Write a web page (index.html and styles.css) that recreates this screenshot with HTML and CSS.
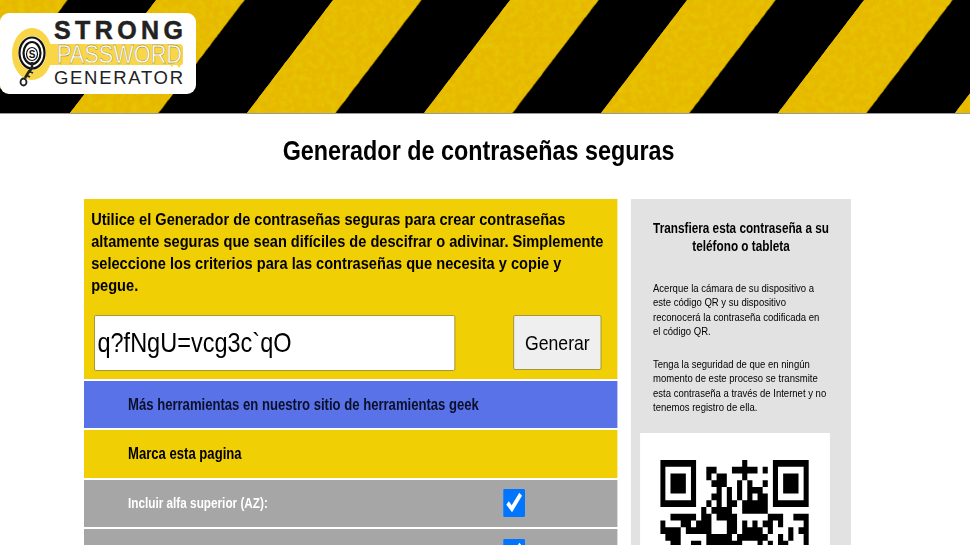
FILE: index.html
```html
<!DOCTYPE html>
<html lang="es">
<head>
    <meta charset="UTF-8">
    <link rel="stylesheet" href="styles.css">
    <title>Generador de contraseñas seguras</title>
</head>
<body>
    <header class="banner">
        <svg class="stripes" width="970" height="113">
            <defs>
                <pattern id="hazard" patternUnits="userSpaceOnUse" width="177" height="113" patternTransform="translate(333 0) skewX(-37.3)">
                    <rect width="88.5" height="113" fill="#e6b802"/>
                </pattern>
                <filter id="grain" x="0" y="0" width="100%" height="100%">
                    <feTurbulence type="fractalNoise" baseFrequency="0.16" numOctaves="3" seed="4" result="noise"/>
                    <feColorMatrix in="noise" type="matrix" values="0 0 0 0 0.80  0 0 0 0 0.55  0 0 0 0 0  2.4 0 0 0 -0.85" result="spots"/>
                    <feComposite in="spots" in2="SourceAlpha" operator="in" result="clipped"/>
                    <feMerge>
                        <feMergeNode in="SourceGraphic"/>
                        <feMergeNode in="clipped"/>
                    </feMerge>
                </filter>
            </defs>
            <rect width="970" height="113" fill="#000"/>
            <rect width="970" height="113" fill="url(#hazard)" filter="url(#grain)"/>
        </svg>
        <div class="logo">
            <svg width="196" height="81" viewBox="0 13 196 81">
                <ellipse cx="32" cy="54" rx="20" ry="26" fill="#f8d648"/>
                <path d="M46 44h133q4 0 4 4v13q0 4-2 4l-2 3-2-3h-4l-1 2-2-2H46z" fill="#f8d648"/>
                <ellipse cx="32" cy="53" rx="14" ry="17" fill="#fff"/>
                <ellipse cx="32" cy="53" rx="12.5" ry="15.5" fill="none" stroke="#111" stroke-width="2.2"/>
                <ellipse cx="32" cy="53" rx="8.5" ry="11" fill="none" stroke="#111" stroke-width="2.2"/>
                <ellipse cx="32" cy="54" rx="5.5" ry="6.5" fill="#fff" stroke="#111" stroke-width="1.2"/>
                <text class="logo-s" x="32" y="57.5" text-anchor="middle">S</text>
                <path d="M32 62v6l-4 5-3 5" fill="none" stroke="#222" stroke-width="2.6"/>
                <path d="M28 71l5 2M26 75l4 2" fill="none" stroke="#222" stroke-width="1.6"/>
                <ellipse cx="23.500" cy="82" rx="3" ry="3.500" fill="#fff" stroke="#222" stroke-width="1.800"/>
                <text class="logo-strong" x="54" y="38.500" textLength="129">STRONG</text>
                <text class="logo-pass" x="57" y="63" textLength="125" lengthAdjust="spacingAndGlyphs">PASSWORD</text>
                <text class="logo-gen" x="54" y="84" textLength="129">GENERATOR</text>
            </svg>
        </div>
    </header>

    <div class="page">
        <h1 class="title">Generador de contraseñas seguras</h1>

        <div class="columns">
            <main class="tool">
                <div class="intro">
                    <p>Utilice el Generador de contraseñas seguras para crear contraseñas altamente seguras que sean difíciles de descifrar o adivinar. Simplemente seleccione los criterios para las contraseñas que necesita y copie y pegue.</p>
                    <div class="generate-row">
                        <input class="password" type="text" value="q?fNgU=vcg3c`qO">
                        <button class="generate-btn" type="button">Generar</button>
                    </div>
                </div>
                <div class="row row-blue">Más herramientas en nuestro sitio de herramientas geek</div>
                <div class="row row-yellow">Marca esta pagina</div>
                <label class="row row-option"><span>Incluir alfa superior (AZ):</span><input type="checkbox" checked></label>
                <label class="row row-option"><span>Incluir alfa inferior (az):</span><input type="checkbox" checked></label>
            </main>
            <aside class="transfer">
                <h2>Transfiera esta contraseña a su teléfono o tableta</h2>
                <p>Acerque la cámara de su dispositivo a este código QR y su dispositivo reconocerá la contraseña codificada en el código QR.</p>
                <p>Tenga la seguridad de que en ningún momento de este proceso se transmite esta contraseña a través de Internet y no tenemos registro de ella.</p>
                <div class="qr-box">
                    <svg class="qr" viewBox="0 0 29 13" preserveAspectRatio="none">
                        <path fill-rule="evenodd" d="M0 0h7v7H0zM1 1v5h5V1zM2 2h3v3H2zM22 0h7v7h-7zM23 1v5h5V1zM24 2h3v3h-3z"/>
                        <path fill="none" stroke="#000" d="M16 .5h1M9 1.500h2M14 1.500h5M20 1.500h1M9 2.500h1M11 2.500h2M16 2.500h1M10 3.500h3M15 3.500h1M17 3.500h1M20 3.500h1M11 4.500h1M13 4.500h1M15 4.500h1M17 4.500h3M10 5.500h2M13 5.500h1M15 5.500h1M17 5.500h1M19 5.500h2M9 6.500h1M11 6.500h1M13 6.500h2M16 6.500h5M8 7.500h1M10 7.500h4M16 7.500h5M2 8.500h4M6 8.500h1M8 8.500h2M11 8.500h4M21 8.500h3M26 8.500h3M0 9.500h1M4 9.500h2M7 9.500h3M13 9.500h2M16 9.500h1M18 9.500h1M20 9.500h2M23 9.500h1M28 9.500h1M0 10.500h4M5 10.500h5M13 10.500h2M16 10.500h4M21 10.500h1M25 10.500h1M27 10.500h2M1 11.500h3M9 11.500h5M15 11.500h6M23 11.500h1M25 11.500h1M28 11.500h1M2 12.500h2M6 12.500h2M9 12.500h7M19 12.500h1M21 12.500h1M23 12.500h2M28 12.500h1"/>
                    </svg>
                </div>
            </aside>
        </div>
    </div>
</body>
</html>
```

FILE: styles.css
```css
html {
    overflow: hidden;
}

body {
    font-family: "Liberation Sans", Arial, sans-serif;
    margin: 0;
    padding: 0;
    background-color: #fff;
    color: #000;
    height: 545px;
    overflow: hidden;
}

.banner {
    position: relative;
    height: 114px;
    border-bottom: 1px solid #999;
    box-sizing: border-box;
}

.stripes {
    display: block;
}

.logo {
    position: absolute;
    left: 0;
    top: 13px;
    width: 196px;
    height: 81px;
    background-color: #fff;
    border-radius: 9px;
}

.logo svg {
    display: block;
    overflow: visible;
}

.logo-s {
    font-size: 10px;
    font-weight: bold;
    fill: #111;
}

.logo-strong {
    font-size: 25px;
    font-weight: bold;
    fill: #222;
    stroke: #222;
    stroke-width: 0.5;
}

.logo-pass {
    font-size: 25px;
    fill: #fff;
    stroke: #8d7c2c;
    stroke-width: 0.4;
}

.logo-gen {
    font-size: 18.5px;
    fill: #222;
}

/* the reference is squeezed sideways, so everything below the banner is too */
.page {
    width: 1154px;
    transform: scaleX(0.84);
    transform-origin: 0 0;
}

.title {
    font-size: 27.8px;
    text-align: center;
    margin: 20px 14.5px 31px 0;
    line-height: 34px;
}

.columns {
    display: flex;
    gap: 16.7px;
    padding-left: 100px;
}

.tool {
    width: 634.5px;
}

.intro {
    background-color: #f1cf05;
    padding: 9px 9px 9px 8.5px;
    height: 162px;
    margin-bottom: 2px;
}

.intro p {
    margin: 0;
    font-size: 17.4px;
    line-height: 22px;
    font-weight: bold;
}

.generate-row {
    display: flex;
    justify-content: space-between;
    margin: 19px 9.5px 0 3.5px;
}

.password {
    width: 430px;
    height: 56px;
    box-sizing: border-box;
    font-family: "Liberation Sans", Arial, sans-serif;
    font-size: 28px;
    padding: 0 3px;
    border: 1px solid #9b8f3a;
    border-radius: 2px;
}

.generate-btn {
    width: 105px;
    height: 55px;
    padding: 0;
    font-family: "Liberation Sans", Arial, sans-serif;
    font-size: 21px;
    background-color: #efefef;
    border: 1px solid #9b8f3a;
    border-radius: 2px;
}

.row {
    height: 47.3px;
    margin-bottom: 2px;
    padding-left: 52.4px;
    display: flex;
    align-items: center;
    font-weight: bold;
    font-size: 15.6px;
}

.row-blue {
    background-color: #5a72e8;
    color: #0a0f2a;
}

.row-yellow {
    background-color: #f1cf05;
}

.row-option {
    background-color: #a6a6a6;
    color: #fff;
    font-size: 14px;
}

.row-option span {
    width: 447px;
}

.row-option input {
    width: 26px;
    height: 26px;
    margin: 0;
    transform: scaleY(1.115);
    accent-color: #0075ff;
}

.transfer {
    width: 262px;
    height: 400px;
    background-color: #e2e2e2;
    padding: 0 10.7px;
    box-sizing: border-box;
}

.transfer h2 {
    font-size: 14px;
    line-height: 18px;
    text-align: center;
    margin: 20px 0 26px;
}

.transfer p {
    font-size: 11.35px;
    line-height: 14.3px;
    margin: 0 17px 19px 15.5px;
}

.qr-box {
    background-color: #fff;
    width: 226px;
    height: 112px;
    padding-top: 26.7px;
    overflow: hidden;
}

.qr {
    display: block;
    width: 176.8px;
    height: 87.4px;
    margin-left: 24.4px;
}
```
